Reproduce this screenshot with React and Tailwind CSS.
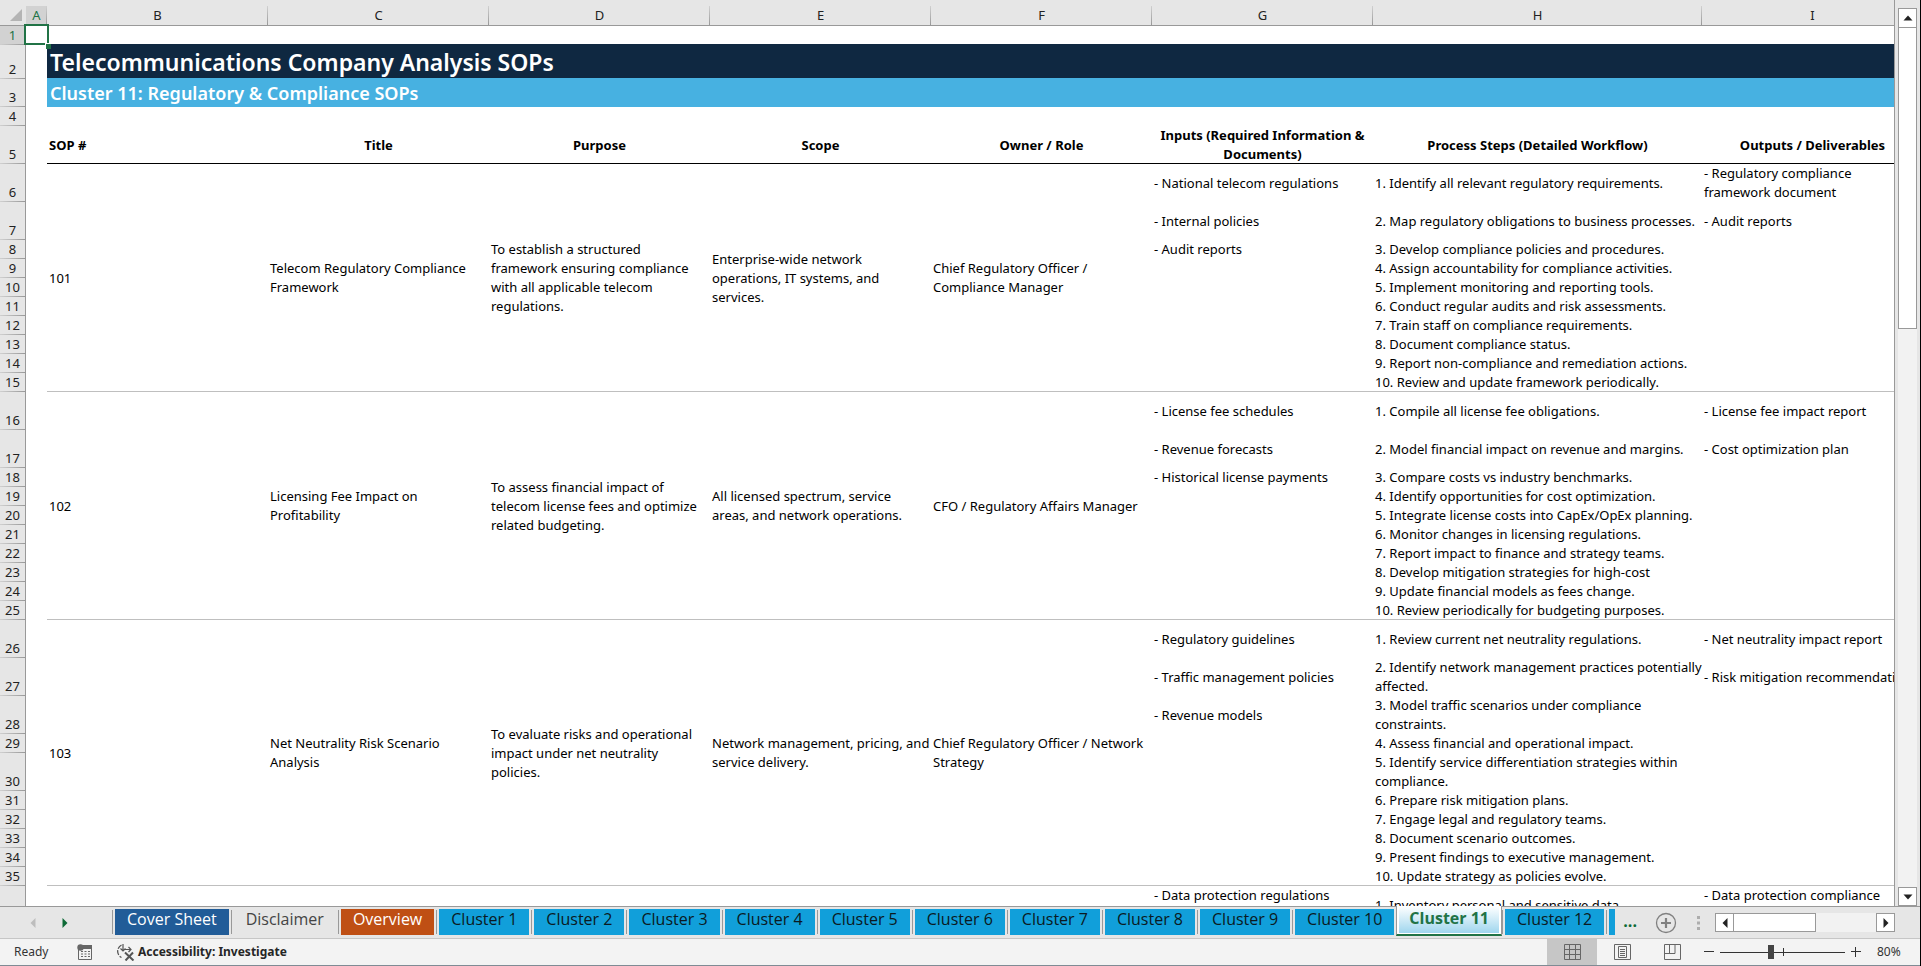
import React from 'react';
import clsx from 'clsx';

const columns = [
    { letter: 'A', width: 'w-[21px]' },
    { letter: 'B', width: 'w-[221px]' },
    { letter: 'C', width: 'w-[221px]' },
    { letter: 'D', width: 'w-[221px]' },
    { letter: 'E', width: 'w-[221px]' },
    { letter: 'F', width: 'w-[221px]' },
    { letter: 'G', width: 'w-[221px]' },
    { letter: 'H', width: 'w-[329px]' },
    { letter: 'I', width: 'w-[221px]' },
];

const headings = [
    'Title',
    'Purpose',
    'Scope',
    'Owner / Role',
    'Inputs (Required Information &\nDocuments)',
    'Process Steps (Detailed Workflow)',
    'Outputs / Deliverables',
];

const sops = [
    {
        id: '101',
        firstRow: 6,
        tallRows: [0, 1],
        title: 'Telecom Regulatory Compliance\nFramework',
        purpose: 'To establish a structured\nframework ensuring compliance\nwith all applicable telecom\nregulations.',
        scope: 'Enterprise-wide network\noperations, IT systems, and\nservices.',
        owner: 'Chief Regulatory Officer /\nCompliance Manager',
        inputs: ['- National telecom regulations', '- Internal policies', '- Audit reports'],
        steps: [
            '1. Identify all relevant regulatory requirements.',
            '2. Map regulatory obligations to business processes.',
            '3. Develop compliance policies and procedures.',
            '4. Assign accountability for compliance activities.',
            '5. Implement monitoring and reporting tools.',
            '6. Conduct regular audits and risk assessments.',
            '7. Train staff on compliance requirements.',
            '8. Document compliance status.',
            '9. Report non-compliance and remediation actions.',
            '10. Review and update framework periodically.',
        ],
        outputs: ['- Regulatory compliance\nframework document', '- Audit reports'],
    },
    {
        id: '102',
        firstRow: 16,
        tallRows: [0, 1],
        title: 'Licensing Fee Impact on\nProfitability',
        purpose: 'To assess financial impact of\ntelecom license fees and optimize\nrelated budgeting.',
        scope: 'All licensed spectrum, service\nareas, and network operations.',
        owner: 'CFO / Regulatory Affairs Manager',
        inputs: ['- License fee schedules', '- Revenue forecasts', '- Historical license payments'],
        steps: [
            '1. Compile all license fee obligations.',
            '2. Model financial impact on revenue and margins.',
            '3. Compare costs vs industry benchmarks.',
            '4. Identify opportunities for cost optimization.',
            '5. Integrate license costs into CapEx/OpEx planning.',
            '6. Monitor changes in licensing regulations.',
            '7. Report impact to finance and strategy teams.',
            '8. Develop mitigation strategies for high-cost',
            '9. Update financial models as fees change.',
            '10. Review periodically for budgeting purposes.',
        ],
        outputs: ['- License fee impact report', '- Cost optimization plan'],
    },
    {
        id: '103',
        firstRow: 26,
        tallRows: [0, 1, 2, 4],
        title: 'Net Neutrality Risk Scenario\nAnalysis',
        purpose: 'To evaluate risks and operational\nimpact under net neutrality\npolicies.',
        scope: 'Network management, pricing, and\nservice delivery.',
        owner: 'Chief Regulatory Officer / Network\nStrategy',
        inputs: ['- Regulatory guidelines', '- Traffic management policies', '- Revenue models'],
        steps: [
            '1. Review current net neutrality regulations.',
            '2. Identify network management practices potentially\naffected.',
            '3. Model traffic scenarios under compliance\nconstraints.',
            '4. Assess financial and operational impact.',
            '5. Identify service differentiation strategies within\ncompliance.',
            '6. Prepare risk mitigation plans.',
            '7. Engage legal and regulatory teams.',
            '8. Document scenario outcomes.',
            '9. Present findings to executive management.',
            '10. Update strategy as policies evolve.',
        ],
        outputs: ['- Net neutrality impact report', '- Risk mitigation recommendations'],
    },
];

const tabs = [
    { name: 'Cover Sheet', style: 'bg-[#215c98] text-white' },
    { name: 'Disclaimer', style: 'text-[#444444]' },
    { name: 'Overview', style: 'bg-[#bf4f14] text-white' },
    ...[1, 2, 3, 4, 5, 6, 7, 8, 9, 10].map((n) => ({ name: `Cluster ${n}`, style: 'bg-[#119fda] text-[#0b1a22]' })),
    { name: 'Cluster 11', active: true },
    { name: 'Cluster 12', style: 'bg-[#119fda] text-[#0b1a22]' },
];

const RowHeader = ({ n, selected }) => (
    <th
        scope="row"
        className={clsx(
            'p-0 text-center align-bottom font-normal border-r border-[#999999] bg-[linear-gradient(to_right,#d0d0d0,#999999)] bg-[length:100%_1px] bg-bottom bg-no-repeat',
            selected ? 'bg-[#d2d2d2] text-[#217346]' : 'bg-[#e6e6e6] text-[#222222]'
        )}
    >
        {n}
    </th>
);

const Cell = ({ children, last, top, ...rest }) => (
    <td
        className={clsx(
            'px-0.5 py-0 whitespace-pre',
            top ? 'align-top' : 'align-middle',
            last && 'shadow-[inset_0_-1px_#bfbfbf]'
        )}
        {...rest}
    >
        {children}
    </td>
);

const SopRows = ({ sop }) => {
    const count = sop.steps.length;
    return sop.steps.map((step, i) => {
        const last = i === count - 1;
        return (
            <tr key={step} className={sop.tallRows.includes(i) ? 'h-[38px]' : 'h-[19px]'}>
                <RowHeader n={sop.firstRow + i} />
                <td className="p-0" />
                {i === 0 && (
                    <>
                        <Cell rowSpan={count} last>{sop.id}</Cell>
                        <Cell rowSpan={count} last>{sop.title}</Cell>
                        <Cell rowSpan={count} last>{sop.purpose}</Cell>
                        <Cell rowSpan={count} last>{sop.scope}</Cell>
                        <Cell rowSpan={count} last>{sop.owner}</Cell>
                    </>
                )}
                <Cell last={last}>{sop.inputs[i]}</Cell>
                <Cell last={last}>{step}</Cell>
                <Cell last={last}>{sop.outputs[i]}</Cell>
            </tr>
        );
    });
};

const Sheet = () => (
    <div className="min-w-0 flex-1 overflow-hidden border-r border-[#999999]">
        <table className="w-full min-w-[1923px] table-fixed border-separate border-spacing-0 bg-white font-['Noto_Sans',sans-serif] text-[13px] leading-[19px] text-black">
            <colgroup>
                <col className="w-[26px]" />
                {columns.map((c) => (
                    <col key={c.letter} className={c.width} />
                ))}
            </colgroup>
            <thead>
                <tr className="h-[26px] bg-[#e6e6e6] text-[#222222]">
                    <td className="border-b border-[#999999] p-0 align-bottom">
                        <svg viewBox="0 0 26 19" className="h-[19px] w-full">
                            <path d="M22 3v12H10z" fill="#b4b4b4" />
                        </svg>
                    </td>
                    {columns.map((c) => (
                        <th key={c.letter} scope="col" className="border-b border-[#999999] p-0 pt-1.5 font-normal">
                            <div
                                className={clsx(
                                    'h-[19px] bg-[linear-gradient(#d0d0d0,#999999)] bg-[length:1px_100%] bg-right bg-no-repeat',
                                    c.letter === 'A' && 'bg-[#d2d2d2] text-[#217346]'
                                )}
                            >
                                {c.letter}
                            </div>
                        </th>
                    ))}
                </tr>
            </thead>
            <tbody>
                <tr className="h-[19px]">
                    <RowHeader n={1} selected />
                    <td className="relative p-0">
                        {/* active cell outline */}
                        <div className="absolute -inset-x-0.5 -top-0.5 bottom-0 z-10 border-2 border-[#217346]" />
                        <div className="absolute -right-1 -bottom-1 z-10 size-1.5 border-t border-l border-white bg-[#217346]" />
                    </td>
                    <td colSpan={8} className="p-0" />
                </tr>
                <tr className="h-[34px]">
                    <RowHeader n={2} />
                    <td className="p-0" />
                    <th colSpan={8} className="bg-[#0f2841] px-[3px] py-0 text-left text-[23px] leading-8 font-semibold text-white shadow-[0_-1px_#0f2841]">
                        Telecommunications Company Analysis SOPs
                    </th>
                </tr>
                <tr className="h-7">
                    <RowHeader n={3} />
                    <td className="p-0" />
                    <th colSpan={8} className="bg-[#47b1e1] px-[3px] py-0 text-left text-lg leading-6 font-semibold text-white shadow-[0_-1px_#47b1e1]">
                        Cluster 11: Regulatory &amp; Compliance SOPs
                    </th>
                </tr>
                <tr className="h-[19px]">
                    <RowHeader n={4} />
                    <td colSpan={9} className="p-0" />
                </tr>
                <tr className="h-[38px]">
                    <RowHeader n={5} />
                    <td className="p-0" />
                    <th className="px-0.5 py-0 text-left font-bold shadow-[inset_0_-1px_#000000]">SOP #</th>
                    {headings.map((h) => (
                        <th key={h} className="px-0.5 py-0 text-center font-bold whitespace-pre shadow-[inset_0_-1px_#000000]">
                            {h}
                        </th>
                    ))}
                </tr>
                {sops.map((sop) => (
                    <SopRows key={sop.id} sop={sop} />
                ))}
                <tr className="h-[38px]">
                    <RowHeader />
                    <td colSpan={6} className="p-0" />
                    <Cell top>- Data protection regulations</Cell>
                    <Cell>1. Inventory personal and sensitive data</Cell>
                    <Cell top>- Data protection compliance</Cell>
                </tr>
            </tbody>
        </table>
    </div>
);

const Triangle = ({ d, className = 'fill-[#222222]' }) => (
    <svg viewBox="0 0 10 10" className={clsx('size-2.5', className)}>
        <path d={d} />
    </svg>
);

const up = 'M5 2.5L9.5 7.5H.5z';
const down = 'M5 7.5L9.5 2.5H.5z';
const left = 'M2.5 5L7.5 0v10z';
const right = 'M7.5 5L2.5 0v10z';

const VerticalScroll = () => (
    <div className="flex w-[25px] flex-col items-center bg-[#e6e6e6] pt-2">
        <button type="button" aria-label="Scroll up" className="flex h-5 w-[19px] items-center justify-center border border-[#999999] bg-white">
            <Triangle d={up} />
        </button>
        <div className="w-[19px] flex-1 bg-[#f2f2f2]">
            <div className="h-[35%] border border-t-0 border-[#999999] bg-white" />
        </div>
        <button type="button" aria-label="Scroll down" className="flex h-[19px] w-[19px] items-center justify-center border border-[#999999] bg-white">
            <Triangle d={down} />
        </button>
    </div>
);

const SheetTab = ({ tab }) => {
    if (tab.active) {
        return (
            <button
                type="button"
                className="relative -mt-px mb-[3px] h-[30px] shrink-0 border-x border-b-2 border-x-[#999999] border-b-[#217346] bg-white px-0.5 pb-px font-bold text-[#217346]"
            >
                <span className="flex h-full items-start bg-linear-to-b from-white to-[#9fd6ee] px-2.5 pt-0.5">{tab.name}</span>
            </button>
        );
    }
    return (
        <div className="flex shrink-0 pt-0.5">
            <div className="mt-px mr-0.5 h-6 w-px bg-[#999999]" />
            <button type="button" className={clsx('mr-0.5 h-[26px] px-3 pb-1.5', tab.style)}>
                {tab.name}
            </button>
        </div>
    );
};

const TabBar = () => (
    <div className="flex h-8 border-t border-[#999999] bg-[#e6e6e6]">
        <div className="flex w-28 items-center gap-[22px] pl-7">
            <button type="button" aria-label="Previous sheet">
                <Triangle d={left} className="fill-[#bdbdbd]" />
            </button>
            <button type="button" aria-label="Next sheet">
                <Triangle d={right} className="fill-[#0e6a37]" />
            </button>
        </div>
        <nav className="flex min-w-0 items-start overflow-visible font-['Open_Sans','Noto_Sans',sans-serif] text-base leading-5">
            {tabs.map((tab) => (
                <SheetTab key={tab.name} tab={tab} />
            ))}
            <div className="flex shrink-0 pt-0.5">
                <div className="mt-px mr-0.5 h-6 w-px bg-[#999999]" />
                <button type="button" aria-label="Cluster 13" className="h-[26px] w-1.5 bg-[#119fda]" />
            </div>
            <button type="button" className="ml-2 pt-1 font-bold text-[#0e6a37]">
                ...
            </button>
        </nav>
        <div className="flex flex-1 items-center justify-end">
            <button type="button" aria-label="New sheet" className="mr-5">
                <svg viewBox="0 0 22 22" className="size-[22px] fill-none stroke-[#808080]">
                    <circle cx="11" cy="11" r="9.5" strokeWidth="1.3" />
                    <path d="M11 6v10M6 11h10" strokeWidth="2.2" />
                </svg>
            </button>
            <svg viewBox="0 0 3 14" className="mr-[15px] h-3.5 w-[3px] fill-[#adadad]">
                <path d="M0 0h3v3H0zM0 5.5h3v3H0zM0 11h3v3H0z" />
            </svg>
            <button type="button" aria-label="Scroll left" className="flex size-[19px] items-center justify-center border border-[#999999] bg-white">
                <Triangle d={left} />
            </button>
            <div className="h-[19px] w-[142px] bg-[#f2f2f2]">
                <div className="h-full w-[82px] border border-l-0 border-[#999999] bg-white" />
            </div>
            <button type="button" aria-label="Scroll right" className="mr-[25px] flex size-[19px] items-center justify-center border border-[#999999] bg-white">
                <Triangle d={right} />
            </button>
        </div>
    </div>
);

const StatusBar = () => (
    <footer className="flex h-7 items-stretch border-t border-b border-t-[#c6c6c6] border-b-[#7f8b94] bg-[#f3f3f3] font-['Noto_Sans',sans-serif] text-xs text-[#333333]">
        <div className="flex flex-1 items-center pl-3.5">
            <span className="w-[63px]">Ready</span>
            <button type="button" aria-label="Record macro" className="mr-[22px]">
                <svg viewBox="0 0 16 16" className="size-4">
                    <path d="M1.5 5v10.5h13V2H6" fill="none" stroke="#666666" />
                    <path d="M6 1h9v4H6z" fill="#666666" />
                    <circle cx="3.5" cy="3.5" r="3.2" fill="#666666" />
                    <path d="M4 7.5h2m1.5 0h2m1.5 0h2M4 10h2m1.5 0h2m1.5 0h2M4 12.5h2m1.5 0h2m1.5 0h2" stroke="#666666" />
                </svg>
            </button>
            <button type="button" className="flex items-center gap-[3px] font-bold text-[#262626]">
                <svg viewBox="0 0 20 18" className="h-[18px] w-5 fill-none stroke-[#555555]">
                    <path d="M6.5 2A7 7 0 0 0 6.5 14.5" strokeWidth="1.3" strokeDasharray="5 1.5" />
                    <path d="M8 1v6.5M5.5 5.5l2.5 2.5L10.5 5.5M9 6.5h7M13.5 4l2.5 2.5-2.5 2.5" strokeWidth="1.2" />
                    <path d="M10 9.5l8.5 8M18 9.5L10.5 17.5" strokeWidth="2" />
                </svg>
                Accessibility: Investigate
            </button>
        </div>
        <button type="button" aria-label="Normal view" className="flex w-[50px] items-center justify-center bg-[#c6c6c6]">
            <svg viewBox="0 0 17 16" className="h-4 w-[17px] fill-none stroke-[#666666]">
                <path d="M.5.5h16v15H.5zM5.5.5v15M11.5.5v15M.5 5.5h16M.5 10.5h16" />
            </svg>
        </button>
        <button type="button" aria-label="Page layout" className="flex w-[50px] items-center justify-center">
            <svg viewBox="0 0 17 16" className="h-4 w-[17px] fill-none stroke-[#666666]">
                <path d="M.5.5h16v15H.5zM4.5 2.5h8v11h-8zM6 5.5h5M6 7.5h5M6 9.5h5M6 11.5h5" />
            </svg>
        </button>
        <button type="button" aria-label="Page break preview" className="flex w-[50px] items-center justify-center">
            <svg viewBox="0 0 17 16" className="h-4 w-[17px] fill-none stroke-[#666666]">
                <path d="M.5.5h16v15H.5zM.5 9.5h10.5V.5M5.5.5v9" />
            </svg>
        </button>
        <div className="flex items-center pl-[7px]">
            <button type="button" aria-label="Zoom out">
                <svg viewBox="0 0 10 10" className="size-2.5 stroke-[#333333]">
                    <path d="M0 4.5h10" />
                </svg>
            </button>
            <div className="relative mx-1.5 flex h-4 w-[125px] items-center">
                <span className="absolute top-1 left-1/2 h-2 w-px bg-[#333333]" />
                <input
                    type="range"
                    aria-label="Zoom"
                    defaultValue={40}
                    className="h-px w-full appearance-none bg-[#333333] [&::-webkit-slider-thumb]:h-3.5 [&::-webkit-slider-thumb]:w-1.5 [&::-webkit-slider-thumb]:appearance-none [&::-webkit-slider-thumb]:bg-[#444444]"
                />
            </div>
            <button type="button" aria-label="Zoom in">
                <svg viewBox="0 0 10 10" className="size-2.5 stroke-[#333333]">
                    <path d="M0 4.5h10M4.5 0v10" />
                </svg>
            </button>
            <span className="w-[59px] pl-4">80%</span>
        </div>
    </footer>
);

const App = () => (
    <div className="flex h-screen flex-col overflow-hidden border-r border-black bg-[#e6e6e6]">
        <main className="flex min-h-0 flex-1">
            <Sheet />
            <VerticalScroll />
        </main>
        <TabBar />
        <StatusBar />
    </div>
);

export default App;
